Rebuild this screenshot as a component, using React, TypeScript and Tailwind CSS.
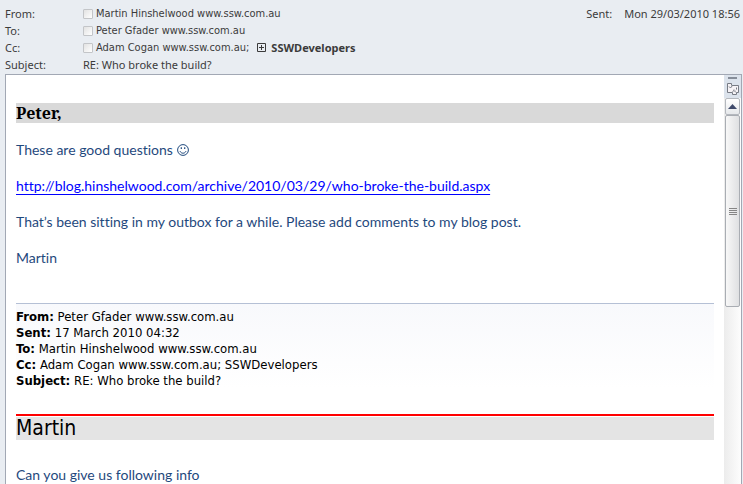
import type { ReactNode } from 'react'

const quotedFields = [
  { label: 'From:', value: 'Peter Gfader www.ssw.com.au' },
  { label: 'Sent:', value: '17 March 2010 04:32' },
  { label: 'To:', value: 'Martin Hinshelwood www.ssw.com.au' },
  { label: 'Cc:', value: 'Adam Cogan www.ssw.com.au; SSWDevelopers' },
  { label: 'Subject:', value: 'RE: Who broke the build?' },
]

function HeaderRow({ label, children }: { label: string; children: ReactNode }) {
  return (
    <div className="flex h-[17px] items-center">
      <dt className="w-[78px] shrink-0">{label}</dt>
      <dd className="flex items-center">{children}</dd>
    </div>
  )
}

function Contact({ name, suffix = '' }: { name: string; suffix?: string }) {
  return (
    <label className="flex items-center gap-[3px] font-['DejaVu_Sans_Condensed','DejaVu_Sans',sans-serif]">
      <input
        type="checkbox"
        className="size-[10px] appearance-none rounded-[1px] border border-[#c3c5c8] bg-linear-to-br from-[#e2e2e2] to-white"
      />
      <span>
        {name}
        {suffix}
      </span>
    </label>
  )
}

function Smiley() {
  return (
    <svg width="12" height="12" viewBox="0 0 12 12" fill="none" stroke="currentColor" aria-hidden="true">
      <circle cx="6" cy="6" r="5.4" />
      <path d="M3 7.2c.6 1.3 1.7 2 3 2s2.4-.7 3-2" />
      <path d="M4.3 3.3v1.8M7.7 3.3v1.8" strokeWidth="1.2" />
    </svg>
  )
}

function Scrollbar() {
  return (
    <div className="flex w-[17px] shrink-0 flex-col items-center bg-linear-to-r from-[#ececec] to-[#fdfdfd]">
      <div className="flex h-[23px] w-full flex-col items-center gap-1 bg-[#dce3ec] pt-[2px]">
        <div className="h-[2px] w-[9px] bg-[#868d99]" />
        <button type="button" aria-label="Select browse object">
          <svg width="12" height="12" viewBox="0 0 12 12" fill="#f6f3f6" stroke="#777b84" className="block">
            <path d="M.5.5h4v2h7v7h-2v2h-4v-2h-5z" />
            <path d="M2 3.500l1.500 1.500 2-2.500M7 6.500l1 1M9.500 4.500v2M5.500 8.500l1.500-1 2 2" />
          </svg>
        </button>
      </div>
      <button
        type="button"
        aria-label="Scroll up"
        className="flex h-[17px] w-[15px] items-center justify-center rounded-[2px] border border-[#b4b8be] bg-linear-to-b from-white to-[#e6e8eb]"
      >
        <svg width="9" height="5" viewBox="0 0 9 5" fill="#3f4a6b" aria-hidden="true">
          <path d="M4.5 0L9 5H0z" />
        </svg>
      </button>
      <div className="flex h-[192px] w-[15px] flex-col items-center justify-center gap-px rounded-[2px] border border-[#a9adb3] bg-linear-to-r from-[#f8f8f8] to-[#dfe0e2]">
        <div className="h-px w-2 bg-[#858585]" />
        <div className="h-px w-2 bg-[#858585]" />
        <div className="h-px w-2 bg-[#858585]" />
        <div className="h-px w-2 bg-[#858585]" />
      </div>
    </div>
  )
}

export default function App() {
  return (
    <main className="flex h-screen flex-col overflow-hidden bg-[#e9edf2] pl-[5px] pr-px pt-[5px] font-['DejaVu_Sans_Condensed','DejaVu_Sans',sans-serif]">
      <header className="flex justify-between pb-px font-['Noto_Sans',sans-serif] text-[11px] leading-[17px] text-[#3b3b3b]">
        <dl>
          <HeaderRow label="From:">
            <Contact name="Martin Hinshelwood www.ssw.com.au" />
          </HeaderRow>
          <HeaderRow label="To:">
            <Contact name="Peter Gfader www.ssw.com.au" />
          </HeaderRow>
          <HeaderRow label="Cc:">
            <Contact name="Adam Cogan www.ssw.com.au" suffix=";" />
            <button type="button" className="ml-2 flex items-center gap-[5px] font-bold">
              <svg width="9" height="9" viewBox="0 0 9 9" fill="none" stroke="#3b3b3b" aria-hidden="true">
                <path d="M.5.5h8v8h-8zM2 4.5h5M4.5 2v5" />
              </svg>
              SSWDevelopers
            </button>
          </HeaderRow>
          <HeaderRow label="Subject:">RE: Who broke the build?</HeaderRow>
        </dl>
        <dl className="flex gap-3 pr-[2px]">
          <dt>Sent:</dt>
          <dd>Mon 29/03/2010 18:56</dd>
        </dl>
      </header>

      <section className="flex min-h-0 flex-1 border border-b-0 border-[#a2a8b4] bg-white">
        <article className="min-w-0 flex-1 px-[10px] pt-7">
          <h1 className="h-5 bg-[#d9d9d9] font-['Noto_Serif','DejaVu_Serif_Condensed','DejaVu_Serif',serif] text-[16px] font-bold leading-5 text-black">
            Peter,
          </h1>
          <div className="mt-[18px] space-y-[18px] font-['Lato',sans-serif] text-[14px] leading-[18px] text-[#1f497d] [font-variant-ligatures:none]">
            <p className="flex items-center gap-1">
              These are good questions <Smiley />
            </p>
            <p>
              <a
                href="http://blog.hinshelwood.com/archive/2010/03/29/who-broke-the-build.aspx"
                className="text-[#0000ff] underline underline-offset-3"
              >
                http://blog.hinshelwood.com/archive/2010/03/29/who-broke-the-build.aspx
              </a>
            </p>
            <p>That’s been sitting in my outbox for a while. Please add comments to my blog post.</p>
            <p>Martin</p>
          </div>

          <div className="mt-9 border-t border-[#b5c0d5] bg-linear-to-b from-[#f8f9fc] to-white pt-[5px] text-[13px] leading-4 text-black">
            {quotedFields.map((field) => (
              <p key={field.label}>
                <b>{field.label}</b> {field.value}
              </p>
            ))}
          </div>

          <h2 className="mt-[25px] border-t-2 border-[#ff0000] pt-px text-[21px] leading-[23px] text-black">
            <span className="block bg-[#e4e4e4]">Martin</span>
          </h2>
          <p className="mt-[26px] font-['Lato',sans-serif] text-[14px] leading-[18px] text-[#1f497d] [font-variant-ligatures:none]">
            Can you give us following info
          </p>
        </article>
        <Scrollbar />
      </section>
    </main>
  )
}
